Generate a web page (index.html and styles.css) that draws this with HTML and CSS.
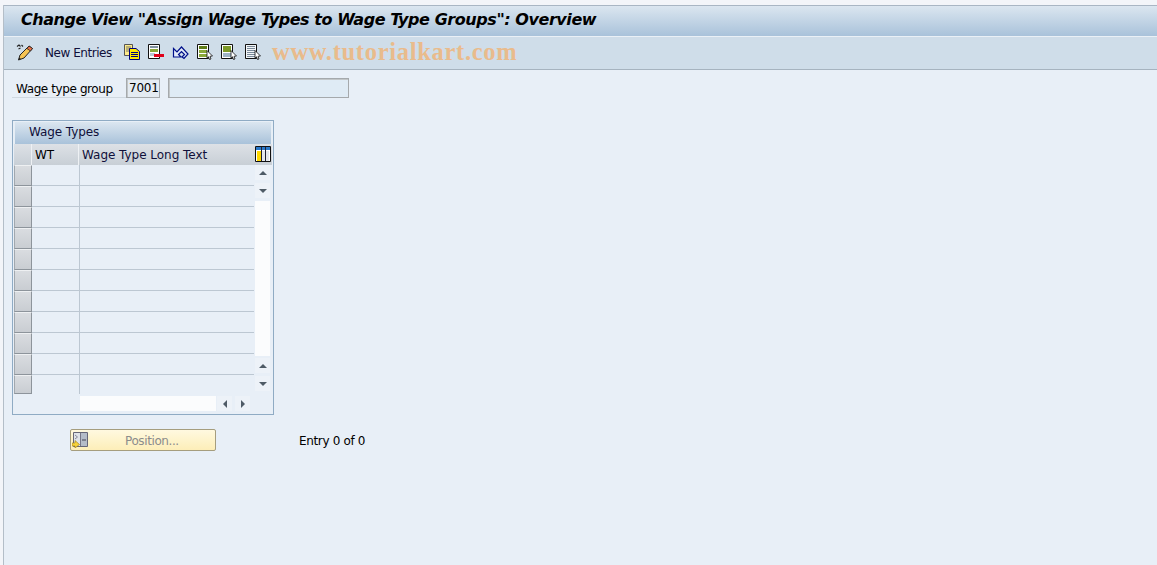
FILE: index.html
```html
<!DOCTYPE html>
<html lang="en">
<head>
<meta charset="utf-8">
<title>Change View</title>
<link rel="stylesheet" href="styles.css">
</head>
<body>
<div class="window">
  <header class="titlebar"><h1 class="title">Change View "Assign Wage Types to Wage Type Groups": Overview</h1></header>
  <div class="toolbar">
    <svg class="icon pencil" width="18" height="18" viewBox="0 0 18 18"><path d="M1 3.500l2-1.500 1.500 1.500M4.500 5l-2 1M5.500 2l1.500 1.500" stroke="#222" stroke-width="1.100" fill="none"/><path d="M13 3l3.500 2.500L8 15l-5.500 2 1.500-5z" fill="#f6c453" stroke="#222"/><path d="M13 3l3.500 2.500-2 2.500L11 5.500z" fill="#e8734a" stroke="#222" stroke-width=".8"/><path d="M2.500 17l.7-2.500 1.800 1.600z" fill="#222"/></svg>
    <span class="tool-label">New Entries</span>
    <div class="icons">
      <svg width="16" height="16" viewBox="0 0 16 16"><path d="M.5.500h8v11h-8z" fill="#ffeb8a" stroke="#555"/><path d="M2 3h5M2 5h5M2 7h3" stroke="#776"/><path d="M5.500 4.500h6.500l3.500 3v8h-10z" fill="#ffe600" stroke="#00007a"/><path d="M7 8.500h7M7 10.500h7M7 12.500h7" stroke="#00007a"/></svg>
      <svg width="16" height="16" viewBox="0 0 16 16"><path d="M.5.500h11v14H.5z" fill="#fff" stroke="#111"/><path d="M2 2h8v2H2z" fill="#7f909f"/><path d="M2 5h8v3H2z" fill="#8aa83a"/><path d="M2 9h5v3H2z" fill="#b9c6d2"/><path d="M6 10h10v3H6z" fill="#e0001a"/></svg>
      <svg width="17" height="16" viewBox="0 0 17 16"><path d="M1.500 4.500v8.500H9L6.500 10.500 9.500 7.500l3 3-2.500 2.500 2 1.500 4-4.500-6.500-7L5 8z" fill="#e4ecfa" stroke="#00108a" stroke-width="1.200"/></svg>
      <svg width="16" height="16" viewBox="0 0 16 16"><path d="M.5.500h11v14H.5z" fill="#fff" stroke="#111"/><path d="M2 2h8v3H2z" fill="#5f7d18"/><path d="M2 6h8v3H2zM2 10h8v3H2z" fill="#8aa83a"/><path d="M10 6.500l5.500 5.500-2.500.3 1 2.700-1.500.5-1-2.700L10 14z" fill="#fff" stroke="#111" stroke-width=".8"/></svg>
      <svg width="16" height="16" viewBox="0 0 16 16"><path d="M.5.500h11v14H.5z" fill="#fff" stroke="#111"/><path d="M2 2h8v6H2z" fill="#7d9a28"/><path d="M2 9h8v4H2z" fill="#9fb4c6"/><path d="M10 6.500l5.500 5.500-2.500.3 1 2.700-1.500.5-1-2.700L10 14z" fill="#fff" stroke="#111" stroke-width=".8"/></svg>
      <svg width="16" height="16" viewBox="0 0 16 16"><path d="M.5.500h11v14H.5z" fill="#f4f6f8" stroke="#111"/><path d="M2 2h8v1H2zM2 4h8v1H2zM2 6h8v1H2zM2 8h8v1H2zM2 10h8v1H2zM2 12h8v1H2z" fill="#7a8a9a"/><path d="M10 6.500l5.500 5.500-2.500.3 1 2.700-1.500.5-1-2.700L10 14z" fill="#fff" stroke="#111" stroke-width=".8"/></svg>
    </div>
    <span class="watermark">www.tutorialkart.com</span>
  </div>
  <main class="content">
    <div class="field-row">
      <label class="field-label">Wage type group</label>
      <span class="input code">7001</span>
      <span class="input desc"></span>
    </div>
    <section class="tablebox">
      <div class="table-title">Wage Types</div>
      <div class="table-head">
        <span class="sel-head"></span>
        <span class="col-wt">WT</span>
        <span class="col-text">Wage Type Long Text</span>
        <svg class="config" width="16" height="16" viewBox="0 0 16 16"><path d="M.5.500h15v15H.5z" fill="#fff" stroke="#111"/><path d="M1 1h14v3H1z" fill="#2a78c8"/><path d="M2 5h4v10H2z" fill="#ffd800"/><path d="M7 5h3v10H7zM11 5h3v10h-3z" fill="#e4e8ec"/><path d="M6.500 1v14M10.500 1v14" stroke="#223"/></svg>
      </div>
      <div class="table-body">
        <div class="selectors">
          <span></span><span></span><span></span><span></span><span></span><span></span><span></span><span></span><span></span><span></span><span class="end"></span>
        </div>
        <div class="rows">
          <div class="row"><i></i></div><div class="row"><i></i></div><div class="row"><i></i></div><div class="row"><i></i></div><div class="row"><i></i></div><div class="row"><i></i></div><div class="row"><i></i></div><div class="row"><i></i></div><div class="row"><i></i></div><div class="row"><i></i></div><div class="row last"><i></i></div>
        </div>
        <div class="vscroll">
          <span class="sbtn"><b class="up"></b></span>
          <span class="sbtn"><b class="down"></b></span>
          <span class="strack"></span>
          <span class="sbtn"><b class="up"></b></span>
          <span class="sbtn"><b class="down"></b></span>
        </div>
      </div>
      <div class="hscroll">
        <span class="htrack"></span>
        <span class="sbtn h"><b class="left"></b></span>
        <span class="sbtn h"><b class="right"></b></span>
      </div>
    </section>
    <div class="actions">
      <button class="pos-btn" type="button">
        <svg width="16" height="16" viewBox="0 0 16 16"><path d="M1.500.500h14v14h-14z" fill="#dfe3ea" stroke="#667"/><path d="M8.500 1h6.500v13H8.500z" fill="#b5bcc8"/><path d="M8.500 1v13" stroke="#778"/><path d="M10 8h4" stroke="#445"/><path d="M3 3l2.500 2L3 7" stroke="#889" fill="none"/><path d="M0 11h3V8.500l4.500 4L3 16v-2H0z" fill="#f6d23c" stroke="#9a7a10" stroke-width=".6"/></svg>
        <span>Position...</span>
      </button>
      <span class="entry">Entry 0 of 0</span>
    </div>
  </main>
</div>
</body>
</html>
```
FILE: styles.css
```css
* { box-sizing: border-box; }
html, body { margin: 0; height: 100%; overflow: hidden; background: #f3f5f9; }
body { padding: 5px 0 0 3px; font: 12px/14px "DejaVu Sans", sans-serif; color: #000; }
.window { height: 560px; background: #e8eff7; border-left: 1px solid #b4bec8; }
.titlebar { height: 32px; background: linear-gradient(#dbe6f0, #a9c2da); border-top: 1px solid #a9b6c4; border-bottom: 1px solid #eaf0f6; display: flex; align-items: center; padding: 0 0 3px 17px; }
.title { margin: 0; font: italic bold 16px/20px "DejaVu Sans", sans-serif; letter-spacing: -.44px; color: #000; white-space: nowrap; }
.toolbar { position: relative; height: 33px; background: #cfdde9; border-bottom: 1px solid #a6b3bf; display: flex; align-items: center; padding-left: 12px; }
.pencil { flex: none; margin-top: -2px; }
.tool-label { margin-left: 11px; color: #10103a; white-space: nowrap; letter-spacing: -.45px; }
.icons { display: flex; align-items: center; gap: 8px; margin: -2px 0 0 12px; }
.watermark { position: absolute; left: 268px; top: 1px; font: bold 24.500px/28px "Liberation Serif", serif; letter-spacing: .7px; color: #e9bb8c; white-space: nowrap; }
.content { padding: 8px 0 0 8px; }
.field-row { display: flex; align-items: flex-start; height: 21px; }
.field-label { width: 114px; height: 20px; padding: 4px 0 0 4px; border-bottom: 1px solid #cfd8e0; white-space: nowrap; letter-spacing: -.4px; }
.input { height: 20px; background: #dfebf5; border: 1px solid #a5a9ac; box-shadow: inset 1px 1px 0 #c2c6c8; line-height: 18px; }
.code { width: 34px; padding-left: 2px; background: #e4ebf2; letter-spacing: -.2px; }
.desc { width: 181px; margin-left: 8px; }
.tablebox { width: 262px; height: 295px; margin-top: 21px; border: 1px solid #8fabc4; padding: 1px 1px 0; }
.table-title { height: 22px; padding: 3px 0 0 14px; background: linear-gradient(#dbe6f0, #a9c2da); border: 1px solid #e6eef5; border-width: 0 1px; color: #10103a; letter-spacing: -.1px; }
.table-head { display: flex; height: 21px; background: linear-gradient(#dde1e6, #c8cfd6); align-items: stretch; }
.sel-head { width: 18px; border-right: 1px solid #eef1f4; }
.col-wt { width: 47px; padding: 4px 0 0 3px; border-right: 1px solid #eef1f4; }
.col-text { width: 176px; padding: 4px 0 0 3px; color: #10103a; white-space: nowrap; letter-spacing: -.03px; }
.config { margin-top: 2px; flex: none; }
.table-body { display: flex; height: 231px; }
.selectors { width: 18px; display: flex; flex-direction: column; }
.selectors span { height: 21px; background: linear-gradient(#d9dce0, #c9cdd2); border: 1px solid #8d949b; border-top-color: #eef0f2; border-left-color: #a2a8ae; }
.selectors .end { height: 19px; }
.rows { width: 222px; height: 229px; }
.row { height: 21px; border-bottom: 1px solid #bcc7d2; display: flex; }
.row.last { border-bottom: 0; height: 19px; }
.row i { display: block; width: 48px; border-right: 1px solid #bcc7d2; }
.vscroll { width: 15px; margin-left: 1px; display: flex; flex-direction: column; }
.sbtn { display: flex; align-items: center; justify-content: center; width: 15px; height: 15px; flex: none; background: #edf2f8; margin-bottom: 3px; }
.strack { height: 155px; background: #fbfcfd; margin-bottom: 2px; flex: none; }
.sbtn b { display: block; width: 0; height: 0; border: 4px solid transparent; }
.sbtn .up { border-bottom-color: #4f5b66; border-top-width: 0; }
.sbtn .down { border-top-color: #4f5b66; border-bottom-width: 0; }
.sbtn .left { border-right-color: #4f5b66; border-left-width: 0; }
.sbtn .right { border-left-color: #4f5b66; border-right-width: 0; }
.hscroll { display: flex; height: 15px; padding-left: 66px; }
.htrack { width: 136px; height: 15px; background: #fbfcfd; margin-right: 1px; }
.sbtn.h { margin: 0 3px 0 0; }
.actions { display: flex; align-items: center; height: 22px; margin-top: 14px; padding-left: 58px; }
.pos-btn { width: 146px; height: 22px; padding: 0 0 0 1px; display: flex; align-items: center; background: linear-gradient(#fff9e0, #fdeeb8); border: 1px solid #a59d7e; border-radius: 2px; font: inherit; color: #8c8c8c; }
.pos-btn span { margin-left: 37px; padding-top: 2px; white-space: nowrap; letter-spacing: -.4px; }
.entry { margin-left: 83px; padding-top: 2px; white-space: nowrap; letter-spacing: -.35px; }
```
